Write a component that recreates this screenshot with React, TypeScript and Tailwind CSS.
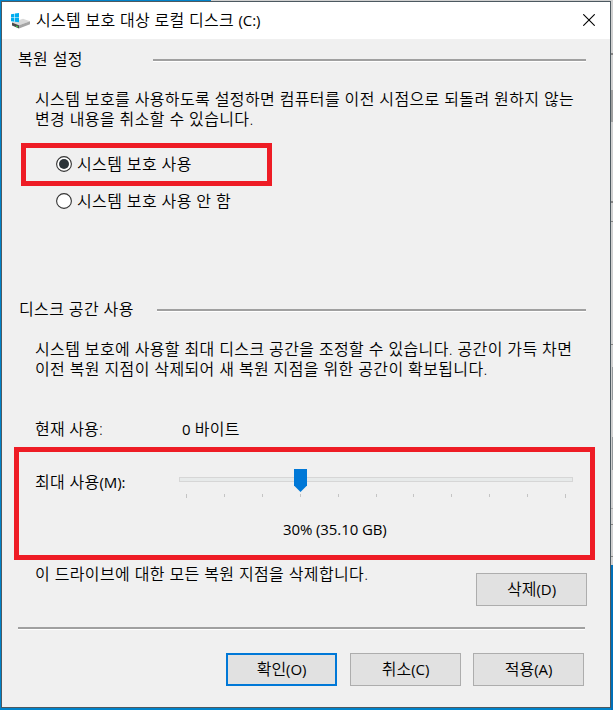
import { ReactNode } from "react";

const ticks = [7, 45, 83, 121, 159, 197, 234, 272, 310, 348, 386];

interface DividerProps {
  className?: string;
}
function Divider({ className = "" }: DividerProps) {
  return (
    <div
      className={`h-[3px] border-t-2 border-[#a0a0a0] border-b border-b-white ${className}`}
    />
  );
}

// Latin glyphs run heavier and slightly smaller than the Hangul around them
function Latin({ children }: { children: ReactNode }) {
  return <span className="text-[15px] font-normal tracking-[-0.1px]">{children}</span>;
}

interface DialogButtonProps {
  label: string;
  accessKey: string;
  isDefault?: boolean;
}
function DialogButton({ label, accessKey, isDefault }: DialogButtonProps) {
  return (
    <button
      className={`h-[33px] w-[111px] bg-[#e1e1e1] pb-0.5 tracking-normal ${
        isDefault ? "border-2 border-[#0078d7]" : "border border-[#adadad]"
      }`}
    >
      {label}
      <Latin>({accessKey})</Latin>
    </button>
  );
}

interface RadioProps {
  label: string;
  checked?: boolean;
}
function Radio({ label, checked }: RadioProps) {
  return (
    <label className="flex h-5 items-center gap-[5px]">
      <svg width="16" height="16" viewBox="0 0 16 16">
        <circle cx="8" cy="8" r="7.4" fill="#fff" stroke="#333" strokeWidth="1.1" />
        {checked && <circle cx="8" cy="8" r="5" fill="#2b3338" />}
      </svg>
      <span>{label}</span>
    </label>
  );
}

function DriveIcon() {
  return (
    <svg width="20" height="16" viewBox="0 0 20 16">
      <path d="M2 9.5 13 5.8 20 8.2 9 12.3z" fill="#d9d9d9" />
      <path d="M2 9.5 9 12.3V15.6L2 12.6z" fill="#4a4a4a" />
      <path d="M9 12.3 20 8.2V11.2L9 15.6z" fill="#a5a5a5" />
      <path d="M6 12.8 8 13.6V14.6L6 13.8z" fill="#3ddc4b" />
      <path d="M1 1.2 4.4.7V4.4H1zM5 .6 9 0V4.4H5zM1 5H4.4V8.7L1 8.2zM5 5H9V9.3L5 8.8z" fill="#00adef" />
    </svg>
  );
}

function TitleBar() {
  return (
    <header className="flex h-[37px] items-center bg-white pl-2 pr-[15px]">
      <DriveIcon />
      <h1 className="ml-1.5 pb-0.5 tracking-[0.3px]">
        시스템 보호 대상 로컬 디스크 <Latin>(C:)</Latin>
      </h1>
      <svg className="mb-px ml-auto" width="12" height="12" viewBox="0 0 12 12">
        <path d="M.3.3 11.7 11.7M11.7.3.3 11.7" stroke="#000" strokeWidth="1.1" />
      </svg>
    </header>
  );
}

function RestoreSettings() {
  return (
    <section>
      <div className="flex h-10 items-center pl-4">
        <h2 className="w-[135px]">복원 설정</h2>
        <Divider className="mt-[3px] w-[433px]" />
      </div>
      <p className="mt-2.5 pl-[33px]">
        시스템 보호를 사용하도록 설정하면 컴퓨터를 이전 시점으로 되돌려 원하지 않는
        <br />
        변경 내용을 취소할 수 있습니다.
      </p>
      <div className="ml-[19px] mt-3.5 flex h-[43px] w-[251px] items-center border-5 border-[#ee1c25] pb-px pl-[30px]">
        <Radio label="시스템 보호 사용" checked />
      </div>
      <div className="flex h-[30px] items-center pl-[54px]">
        <Radio label="시스템 보호 사용 안 함" />
      </div>
    </section>
  );
}

function UsageSlider() {
  return (
    <div className="relative w-[394px] pt-2">
      <div className="h-[5px] border border-[#d6d6d6] bg-[#e7eaea]" />
      <svg className="absolute left-[115px] top-0" width="13" height="23" viewBox="0 0 13 23">
        <path d="M0 0H13V16.5L6.5 23 0 16.5z" fill="#0078d7" />
      </svg>
      <svg className="mt-3 block" width="394" height="4" shapeRendering="crispEdges">
        {ticks.map((x, i) => (
          <rect
            key={x}
            x={x}
            y="0"
            width="1"
            height={i === 0 || i === ticks.length - 1 ? 4 : 3}
            fill="#c4c4c4"
          />
        ))}
      </svg>
    </div>
  );
}

function DiskUsage() {
  return (
    <section className="mt-[73px]">
      <div className="flex h-10 items-center pl-[17px]">
        <h2 className="w-[138px]">디스크 공간 사용</h2>
        <Divider className="mt-[3px] w-[429px]" />
      </div>
      <p className="mt-2.5 pl-[33px]">
        시스템 보호에 사용할 최대 디스크 공간을 조정할 수 있습니다. 공간이 가득 차면
        <br />
        이전 복원 지점이 삭제되어 새 복원 지점을 위한 공간이 확보됩니다.
      </p>
      <div className="mt-10 flex pl-[33px] tracking-[0.2px]">
        <span className="w-[147px]">현재 사용:</span>
        <span>
          <Latin>0</Latin> 바이트
        </span>
      </div>
      <div className="ml-3 mt-2 h-[113px] w-[581px] border-5 border-[#ee1c25] pl-4 pt-[17px]">
        <div className="flex">
          <span className="mt-[3px] w-36 tracking-[0.3px]">
            최대 사용<Latin>(M):</Latin>
          </span>
          <UsageSlider />
        </div>
        <div className="mt-[21px] pl-[248px]">
          <Latin>30% (35.10 GB)</Latin>
        </div>
      </div>
      <div className="flex h-[46px] justify-between pl-[33px] pr-[23px]">
        <span className="mt-1">이 드라이브에 대한 모든 복원 지점을 삭제합니다.</span>
        <div className="mt-[13px]">
          <DialogButton label="삭제" accessKey="D" />
        </div>
      </div>
    </section>
  );
}

// Sliver of the parent window and desktop visible at the right edge
function BackgroundEdge() {
  return (
    <div className="flex w-0.5 flex-col bg-[#d0d0d0]">
      <div className="mt-[52px] h-0.5 bg-[#858585]" />
      <div className="mt-[35px] h-8 bg-[#a0a0a0]" />
      <div className="mt-[79px] h-0.5 bg-[#858585]" />
      <div className="mt-[18px] h-px bg-[#858585]" />
      <div className="mt-[122px] h-px bg-[#858585]" />
      <div className="ml-px mt-[22px] h-[33px] bg-[#969a9c]" />
      <div className="ml-px mt-[37px] h-[33px] bg-[#969a9c]" />
      <div className="mt-[38px] h-px bg-[#a8a8a8]" />
      <div className="mt-[15px] h-px bg-[#858585]" />
      <div className="mt-[31px] h-px bg-[#858585]" />
      <div className="mt-2 flex-1 bg-[#006fb8]" />
    </div>
  );
}

export default function App() {
  return (
    <div className="flex h-[710px] w-[613px] flex-col overflow-hidden bg-[#0083ca] font-['Open_Sans','Noto_Sans_CJK_KR',sans-serif] text-[16px] font-[350] leading-5 tracking-[0.38px] whitespace-nowrap text-black">
      <div className="flex h-px shrink-0">
        <div className="w-[211px]" />
        <div className="flex-1 bg-[#d0d0d0]" />
      </div>
      <div className="flex flex-1 pl-px">
        <main className="h-[707px] w-[610px] border border-[#4d5960] bg-[#f0f0f0]">
          <TitleBar />
          <RestoreSettings />
          <DiskUsage />
          <Divider className="ml-4 mt-[21px] w-[567px]" />
          <div className="mt-[23px] flex justify-end pr-[26px]">
            <DialogButton label="확인" accessKey="O" isDefault />
            <div className="ml-[13px] mr-3">
              <DialogButton label="취소" accessKey="C" />
            </div>
            <DialogButton label="적용" accessKey="A" />
          </div>
        </main>
        <BackgroundEdge />
      </div>
    </div>
  );
}
